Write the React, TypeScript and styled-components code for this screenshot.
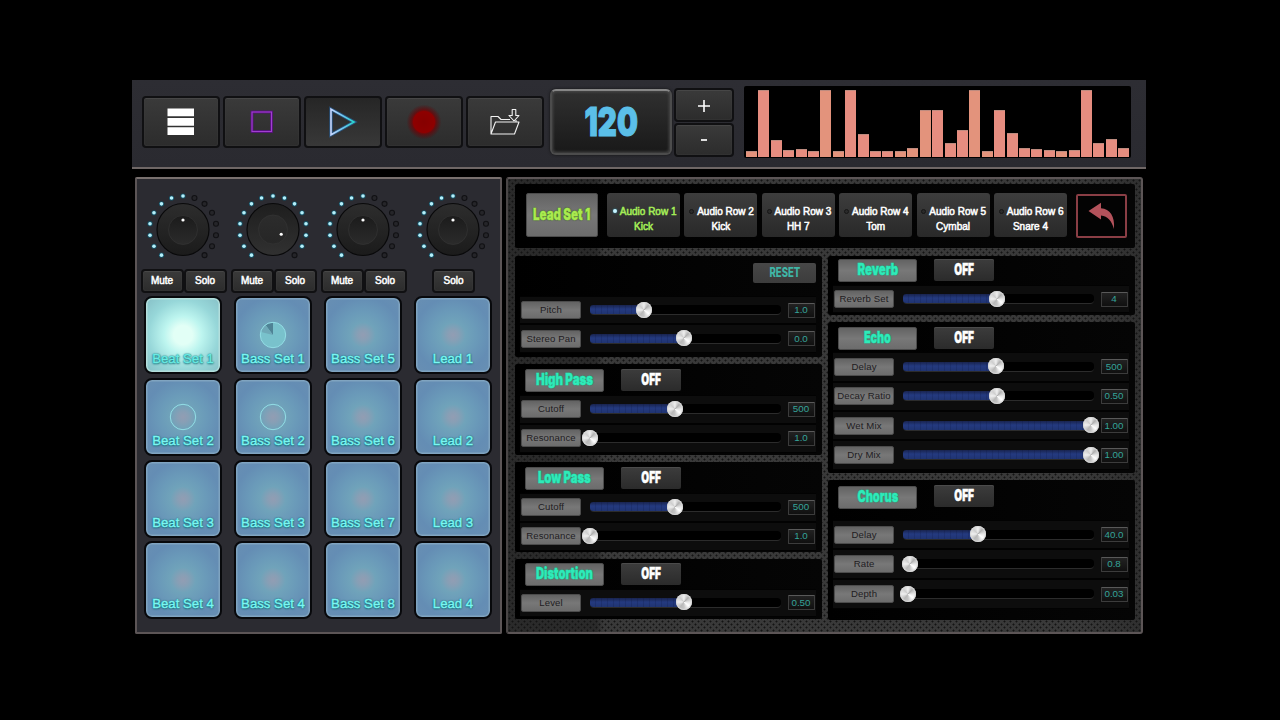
import React, { useLayoutEffect, useRef } from 'react';
import styled, { createGlobalStyle, css } from 'styled-components';

const GlobalStyle = createGlobalStyle`
  * { box-sizing: border-box; }
  body { margin: 0; background: #000; overflow: hidden; }
  button { margin: 0; padding: 0; border: 0; font: inherit; color: inherit; }
`;

const Screen = styled.div`
  width: 1280px;
  height: 720px;
  padding: 80px 134px 0 132px;
  background: #000;
  font-family: 'Liberation Sans', Arial, sans-serif;
`;

/* ---------- toolbar ---------- */

const Toolbar = styled.header`
  display: flex;
  height: 89px;
  padding-left: 10px;
  background: linear-gradient(#2d2d33, #2a2a30);
  border-bottom: 2px solid #6f6766;
`;

const Transport = styled.div`
  display: flex;
  gap: 3px;
  margin-top: 16px;
`;

const raised = css`
  background: linear-gradient(#3a3a3a, #2c2c2c);
  border: 2px solid #101012;
  border-radius: 4px;
  box-shadow: inset 0 1px 0 #464646, inset 0 0 2px #404040;
`;

const ToolButton = styled.button<{ $active?: boolean }>`
  ${raised}
  display: flex;
  align-items: center;
  justify-content: center;
  width: 78px;
  height: 52px;
  ${(p) => p.$active && css`background: linear-gradient(#262626, #383838); box-shadow: none;`}
`;

const Tempo = styled.div`
  display: flex;
  align-items: center;
  justify-content: center;
  width: 122px;
  height: 66px;
  margin: 9px 0 0 6px;
  color: #5bbfe8;
  background: linear-gradient(#303030, #191919);
  border: 2px solid #4c4c4c;
  border-top-color: #868686;
  border-radius: 6px;
  box-shadow: 0 0 3px #111, inset 0 0 3px 1px #4a4a4a;
`;

const TempoSteps = styled.div`
  display: flex;
  flex-direction: column;
  gap: 1px;
  margin: 8px 0 0 2px;
`;

const StepButton = styled.button`
  ${raised}
  display: flex;
  align-items: center;
  justify-content: center;
  width: 60px;
  height: 34px;
`;

const Spectrum = styled.div`
  display: flex;
  align-items: flex-end;
  gap: 1.4px;
  width: 387px;
  height: 72px;
  margin: 6px 0 0 10px;
  padding: 0 2px 1px 2px;
  background: #000;
  border-radius: 2px;
`;

const Bar = styled.div<{ $warm: boolean }>`
  flex: 1;
  background: ${(p) => (p.$warm ? '#e3937c' : '#e68d80')};
  border-top: 1px solid #bd8b7f;
`;

/* ---------- squeezed poster lettering ---------- */

const PosterBox = styled.span<{ $size: number; $weight: number; $lift: number }>`
  display: flex;
  justify-content: center;
  padding-bottom: ${(p) => p.$lift}px;
  font: ${(p) => p.$weight} ${(p) => p.$size}px/1 Inter, 'Liberation Sans', sans-serif;
  white-space: nowrap;
  -webkit-text-stroke: ${(p) => (p.$weight > 800 ? p.$size * 0.03 : 0)}px currentColor;
`;

const PosterInk = styled.span`
  display: block;
  flex: none;
`;

interface PosterProps { text: string; width: number; size?: number; weight?: number; lift?: number }

function Poster({ text, width, size = 15.6, weight = 900, lift = 0 }: PosterProps) {
  const ink = useRef<HTMLSpanElement>(null);
  useLayoutEffect(() => {
    const el = ink.current;
    if (el) el.style.transform = `scaleX(${width / el.offsetWidth})`;
  }, [text, width, size]);
  return (
    <PosterBox $size={size} $weight={weight} $lift={lift}>
      <PosterInk ref={ink}>{text}</PosterInk>
    </PosterBox>
  );
}

/* ---------- left panel ---------- */

const Body = styled.div`
  display: flex;
  gap: 4px;
  padding: 8px 0 0 3px;
`;

const PadPanel = styled.section`
  display: flex;
  width: 367px;
  height: 457px;
  padding: 13px 0 0 3px;
  background: #2b2b31;
  border: 2px solid #5c5556;
  border-top-color: #79716f;
  border-radius: 2px;
  gap: 4px;
`;

const Column = styled.div`
  display: flex;
  flex-direction: column;
  align-items: center;
  width: 86px;
`;

const Dial = styled.svg`
  display: block;
  width: 76px;
  height: 76px;
`;

const SmallButtons = styled.div`
  display: flex;
  justify-content: center;
  margin: 1px 0 3px 1px;
`;

const SmallButton = styled.button`
  ${raised}
  width: 43px;
  height: 24px;
  color: #fff;
  font-size: 10px;
  line-height: 20px;
  text-align: center;
  -webkit-text-stroke: 0.5px #fff;
`;

const Pads = styled.div`
  display: grid;
  gap: 3.8px;
`;

const Pad = styled.button<{ $lit?: boolean }>`
  display: grid;
  grid-template-rows: 52px 18px;
  justify-items: center;
  align-content: start;
  align-items: start;
  width: 78px;
  height: 78px;
  border: 2px solid #08090c;
  border-radius: 8px;
  box-shadow: inset 0 0 0 1.5px ${(p) => (p.$lit ? '#b4dfdc' : '#80a4c0')};
  background: ${(p) =>
    p.$lit
      ? 'radial-gradient(circle at 50% 50%, #e2fff6 0 18%, #bdf5ef 36%, #97d7d9 66%, #86bfc6 100%)'
      : 'radial-gradient(circle at 50% 50%, #929db3 0, #889fb5 10%, #70a3ba 24%, #6a9ab9 45%, #648db4 72%, #688fb3 100%)'};
`;

const PadMark = styled.svg`
  width: 28px;
  height: 28px;
  margin-top: 23px;
`;

const PadLabel = styled.span<{ $lit?: boolean }>`
  grid-row: 2;
  color: ${(p) => (p.$lit ? '#6cebe4' : '#7bf6f2')};
  font-size: 13.2px;
  line-height: 18px;
  white-space: nowrap;
  -webkit-text-stroke: 0.4px currentColor;
  text-shadow: 0 0 2px #0c6870, 0 1px 2px #0c6870, 0 0 1px #0c6870;
`;

/* ---------- right panel ---------- */

const FxPanel = styled.section`
  width: 637px;
  height: 457px;
  padding: 5px 6px 0 7px;
  border: 2px solid #5c5556;
  border-left-color: #4a4646;
  border-radius: 3px;
  background:
    radial-gradient(circle at 1.5px 1.5px, #141414 0 0.7px, transparent 1.3px) 0 0 / 6px 6px,
    radial-gradient(circle at 4.5px 4.5px, #141414 0 0.7px, transparent 1.3px) 0 0 / 6px 6px,
    linear-gradient(90deg, #2a2a2a 0 14%, #393939 15% 90%, #2f2f2f);
`;

const well = css`
  background: linear-gradient(90deg, #000, #050505);
  border-radius: 2px;
`;

const RowBar = styled.div`
  ${well}
  display: flex;
  align-items: flex-start;
  height: 64px;
  padding: 9px 0 0 11px;
  margin-bottom: 8px;
`;

const metal = css`
  display: flex;
  align-items: center;
  justify-content: center;
  background: linear-gradient(#636363, #787878 50%, #6c6c6c);
  border: 1px solid #4c4c4c;
  border-radius: 2px;
`;

const SetButton = styled.button`
  ${metal}
  width: 72px;
  height: 44px;
  margin: 0 9px 0 0;
  color: #a9ea50;
  text-shadow: 0 0 2px #2a4a08, 0 0 1px #2a4a08;
`;

const AudioRow = styled.button<{ $on?: boolean }>`
  display: grid;
  align-content: center;
  width: 73px;
  height: 44px;
  margin-right: 4.4px;
  border-radius: 3px;
  background: linear-gradient(#3d3d3d, #292929);
  color: ${(p) => (p.$on ? '#a6ee58' : '#fff')};
  font-size: 10px;
  line-height: 15px;
  text-align: center;
  white-space: nowrap;
  padding-top: 7px;
  -webkit-text-stroke: 0.5px currentColor;
`;

const RowName = styled.span`
  display: flex;
  align-items: center;
  justify-content: flex-end;
  gap: 3px;
  padding-right: 3.5px;
`;

const RowLed = styled.i<{ $on?: boolean }>`
  width: ${(p) => (p.$on ? 4 : 5)}px;
  height: ${(p) => (p.$on ? 4 : 5)}px;
  border-radius: 50%;
  background: ${(p) => (p.$on ? '#c9f4ff' : '#2a2a2a')};
  border: ${(p) => (p.$on ? '0' : '1px solid #161616')};
  box-shadow: ${(p) => (p.$on ? '0 0 2px #2a9ab5' : 'none')};
`;

const BackButton = styled.button`
  display: flex;
  align-items: center;
  justify-content: center;
  width: 51px;
  height: 44px;
  margin: 1px 0 0 5px;
  background: #030303;
  border: 2px solid #8a3e45;
  border-radius: 2px;
`;

const Columns = styled.div`
  display: flex;
  gap: 6px;
`;

const FxColumn = styled.div`
  display: flex;
  flex-direction: column;
  gap: 7px;
  width: 308px;
`;

const Unit = styled.div<{ $height: number; $top: number }>`
  ${well}
  height: ${(p) => p.$height}px;
  padding: ${(p) => p.$top}px 6px 0 5px;
`;

const UnitHeader = styled.div<{ $gap: number; $end?: boolean }>`
  display: flex;
  justify-content: ${(p) => (p.$end ? 'flex-end' : 'flex-start')};
  height: 22px;
  padding-left: 5px;
  margin-bottom: ${(p) => p.$gap}px;
`;

const UnitTitle = styled.span`
  ${metal}
  width: 79px;
  height: 23px;
  color: #2feab9;
  text-shadow: 0 0 2px #1d8a72, 0 0 1px #0b5a48;
`;

const Toggle = styled.button<{ $lift?: number }>`
  display: flex;
  align-items: center;
  justify-content: center;
  width: 60px;
  height: 22px;
  margin: -${(p) => p.$lift ?? 0}px 0 0 17px;
  color: #fff;
  background: linear-gradient(#3c3c3c, #2b2b2b);
  border-radius: 2px;
  box-shadow: inset 0 1px 0 #4b4b4b;
`;

const Reset = styled.button`
  display: flex;
  align-items: center;
  justify-content: center;
  width: 63px;
  height: 20px;
  color: #3fb5a6;
  background: linear-gradient(#474747, #3c3c3c);
  border-radius: 2px;
`;

const ParamRow = styled.div<{ $height: number }>`
  display: flex;
  align-items: center;
  height: ${(p) => p.$height}px;
  padding-left: 1px;
  background: linear-gradient(#020202 0 1px, #0d0d0d 1px calc(100% - 1px), #020202 calc(100% - 1px));
`;

const ParamLabel = styled.span`
  ${metal}
  width: 60px;
  height: 18px;
  margin-right: 8.5px;
  color: #211c1f;
  font: 9.6px/16px 'Liberation Sans', Arial, sans-serif;
  letter-spacing: 0.12px;
  white-space: nowrap;
`;

const Track = styled.div`
  position: relative;
  width: 191px;
  height: 10px;
  margin-right: 7px;
  background: #000;
  border-bottom: 1px solid #2c2c2c;
  border-radius: 4px;
`;

const Fill = styled.div`
  height: 9px;
  border-radius: 3px 0 0 3px;
  background:
    repeating-linear-gradient(90deg, transparent 0 5px, rgba(10, 20, 60, 0.2) 5px 6px),
    linear-gradient(#19244e, #243a80 45%, #203472);
`;

const Thumb = styled.div`
  position: absolute;
  top: -3.5px;
  width: 16px;
  height: 16px;
  margin-left: -8px;
  border-radius: 50%;
  background: conic-gradient(#f0f0f0, #b0b0b0 12%, #e6e6e6 25%, #fff 36%, #c4c4c4 50%, #b8b8b8 60%, #f0f0f0 75%, #cecece 88%, #f0f0f0);
  box-shadow: inset 0 0 1px 1px #d8d8d8;
`;

const ValueBox = styled.span`
  display: flex;
  align-items: center;
  justify-content: center;
  width: 27px;
  height: 15px;
  color: #35a399;
  font: 9.8px/12px 'Liberation Sans', Arial, sans-serif;
  background: linear-gradient(#222, #101010);
  border: 1px solid #3c3c3c;
  border-top-color: #595959;
  border-radius: 1px;
`;

/* ---------- data ---------- */

const BARS = [6.5, 67.5, 17.5, 7, 8.3, 6.5, 67.5, 6.5, 67.5, 23, 6.5, 6.5, 6.5, 9, 46.7, 46.7, 13.8, 27, 67.5, 6.5, 46.7, 24, 9, 8.5, 7, 6.5, 7, 67.5, 13.8, 17.7, 9];
const WARM = [0, 6, 7, 12, 13, 14, 18, 19, 25];

type Mark = 'playing' | 'ring' | undefined;
interface Channel { lit: number; angle: number; mute: boolean; pads: [string, Mark?][] }

const CHANNELS: Channel[] = [
  { lit: 8, angle: 0, mute: true, pads: [['Beat Set 1'], ['Beat Set 2', 'ring'], ['Beat Set 3'], ['Beat Set 4']] },
  { lit: 14, angle: 120, mute: true, pads: [['Bass Set 1', 'playing'], ['Bass Set 2', 'ring'], ['Bass Set 3'], ['Bass Set 4']] },
  { lit: 8, angle: 0, mute: true, pads: [['Bass Set 5'], ['Bass Set 6'], ['Bass Set 7'], ['Bass Set 8']] },
  { lit: 8, angle: 0, mute: false, pads: [['Lead 1'], ['Lead 2'], ['Lead 3'], ['Lead 4']] },
];

const ROWS = ['Kick', 'Kick', 'HH 7', 'Tom', 'Cymbal', 'Snare 4'];

type Param = [label: string, at: number, value: string];
interface Fx { title?: string; titleWidth?: number; height: number; top: number; gap: number; pitch: number; lift?: number; params: Param[] }

const LEFT: Fx[] = [
  { height: 101, top: 6.5, gap: 11.2, pitch: 28.8, params: [['Pitch', 54, '1.0'], ['Stereo Pan', 94.5, '0.0']] },
  { title: 'High Pass', titleWidth: 57, height: 91, top: 5, gap: 3.7, pitch: 29, params: [['Cutoff', 85.5, '500'], ['Resonance', 0, '1.0']] },
  { title: 'Low Pass', titleWidth: 53, height: 90, top: 5, gap: 3.5, pitch: 29, lift: 0.5, params: [['Cutoff', 85.5, '500'], ['Resonance', 0, '1.0']] },
  { title: 'Distortion', titleWidth: 57, height: 60, top: 4, gap: 3.5, pitch: 28, lift: 0.5, params: [['Level', 94.5, '0.50']] },
];

const RIGHT: Fx[] = [
  { title: 'Reverb', titleWidth: 41, height: 59, top: 3, gap: 4, pitch: 28, params: [['Reverb Set', 94, '4']] },
  { title: 'Echo', titleWidth: 27, height: 151, top: 5, gap: 3.3, pitch: 29.4, params: [['Delay', 93, '500'], ['Decay Ratio', 94, '0.50'], ['Wet Mix', 188.5, '1.00'], ['Dry Mix', 188.5, '1.00']] },
  { title: 'Chorus', titleWidth: 41, height: 140, top: 6, gap: 11.7, pitch: 29.8, lift: 1.5, params: [['Delay', 75, '40.0'], ['Rate', 7, '0.8'], ['Depth', 5, '0.03']] },
];

/* ---------- pieces ---------- */

function Knob({ id, lit, angle }: { id: number; lit: number; angle: number }) {
  const big = lit === 14;
  const rad = (d: number) => (d * Math.PI) / 180;
  return (
    <Dial viewBox="-38 -37.5 76 76">
      <defs>
        <linearGradient id={`k${id}`} x1="0" y1="0" x2="0" y2="1">
          <stop offset="0" stopColor={big ? '#1e1e1e' : '#2d2d2d'} />
          <stop offset="1" stopColor={big ? '#313131' : '#1b1b1b'} />
        </linearGradient>
        <linearGradient id={`c${id}`} x1="0" y1="0" x2="0" y2="1">
          <stop offset="0" stopColor={big ? '#2c2c2c' : '#1b1b1b'} />
          <stop offset="1" stopColor={big ? '#262626' : '#2b2b2b'} />
        </linearGradient>
      </defs>
      {Array.from({ length: 15 }, (_, i) => {
        const a = rad(-140 + i * 20);
        const x = Math.sin(a) * 33.5;
        const y = -Math.cos(a) * 33.5;
        return i < lit ? (
          <g key={i}>
            <circle cx={x} cy={y} r="2.6" fill="#145064" />
            <circle cx={x} cy={y} r="1.8" fill="#b5f0fb" />
          </g>
        ) : (
          <circle key={i} cx={x} cy={y} r="2.5" fill="#252529" stroke="#111114" strokeWidth="1.1" />
        );
      })}
      <circle r="26" fill={`url(#k${id})`} stroke="#09090a" strokeWidth="1.2" />
      <circle r="14.5" cy={big ? 0 : 0.5} fill={`url(#c${id})`} stroke="#343434" strokeWidth="0.7" />
      <circle cx={Math.sin(rad(angle)) * 9.5} cy={-Math.cos(rad(angle)) * 9.5} r="1.6" fill="#fff" />
    </Dial>
  );
}

function PadSign({ mark }: { mark: Mark }) {
  if (!mark) return null;
  return (
    <PadMark viewBox="-14 -14 28 28">
      {mark === 'playing' && (
        <>
          <circle r="12.5" fill="#79c2cc" />
          <path d="M0 0 L0 -12.5 A12.5 12.5 0 0 0 -7.5 -10 Z" fill="#4f8395" />
          <path d="M0 0 L-7.5 -10 A12.5 12.5 0 0 0 -12 -3 Z" fill="#6fa9b8" />
        </>
      )}
      <circle r="12.7" fill="none" stroke="#93dfe6" strokeWidth="1" />
    </PadMark>
  );
}

function Effect({ fx }: { fx: Fx }) {
  return (
    <Unit $height={fx.height} $top={fx.top}>
      <UnitHeader $gap={fx.gap} $end={!fx.title}>
        {fx.title ? (
          <>
            <UnitTitle><Poster text={fx.title} width={fx.titleWidth!} lift={2} /></UnitTitle>
            <Toggle $lift={fx.lift}><Poster text="OFF" width={19.5} /></Toggle>
          </>
        ) : (
          <Reset><Poster text="RESET" width={31} size={13} weight={800} /></Reset>
        )}
      </UnitHeader>
      {fx.params.map(([label, at, value]) => (
        <ParamRow key={label} $height={fx.pitch}>
          <ParamLabel>{label}</ParamLabel>
          <Track>
            <Fill style={{ width: at }} />
            <Thumb style={{ left: at }} />
          </Track>
          <ValueBox>{value}</ValueBox>
        </ParamRow>
      ))}
    </Unit>
  );
}

export default function App() {
  return (
    <Screen>
      <GlobalStyle />
      <Toolbar>
        <Transport>
          <ToolButton aria-label="Menu">
            <svg width="30" height="30" viewBox="0 0 30 30">
              <path d="M1.5 1.5h26.500v7.800h-26.500zM1.5 10.900h26.500v7.800h-26.500zM1.5 20.300h26.500v7.800h-26.500z" fill="#fff" />
            </svg>
          </ToolButton>
          <ToolButton aria-label="Stop">
            <svg width="30" height="30" viewBox="0 0 30 30">
              <rect x="5" y="5" width="19.500" height="19.500" fill="none" stroke="#571080" strokeWidth="2.8" />
              <rect x="5" y="5" width="19.500" height="19.500" fill="none" stroke="#a23fd0" strokeWidth="1.1" />
            </svg>
          </ToolButton>
          <ToolButton $active aria-label="Play">
            <svg width="34" height="34" viewBox="0 0 34 34">
              <defs>
                <linearGradient id="play" x1="0" x2="1">
                  <stop offset="0" stopColor="#c9d8ff" />
                  <stop offset="0.5" stopColor="#6fc6f0" />
                  <stop offset="1" stopColor="#27d6cc" />
                </linearGradient>
              </defs>
              <path d="M5 4.200 28 17 5 29.800z" fill="none" stroke="#2465a8" strokeWidth="3.6" opacity="0.6" />
              <path d="M5 4.200 28 17 5 29.800z" fill="none" stroke="url(#play)" strokeWidth="1.6" />
            </svg>
          </ToolButton>
          <ToolButton aria-label="Record">
            <svg width="36" height="36" viewBox="0 0 36 36">
              <defs>
                <radialGradient id="rec">
                  <stop offset="0" stopColor="#860000" />
                  <stop offset="0.6" stopColor="#8e0000" />
                  <stop offset="0.7" stopColor="#6c0508" stopOpacity="0.75" />
                  <stop offset="1" stopColor="#5a0508" stopOpacity="0" />
                </radialGradient>
              </defs>
              <circle cx="18" cy="18" r="17.500" fill="url(#rec)" />
            </svg>
          </ToolButton>
          <ToolButton aria-label="Load">
            <svg width="32" height="30" viewBox="0 0 32 30" fill="none" stroke="#f2f2f2" strokeWidth="1.1" strokeLinejoin="round">
              <path d="M2 27V9.500h7l3 3h9M2 27l4.500-12h23.500L25.500 27zM27 15v-2" />
              <path d="M23.200 2.500h3.600v6h3.200l-5 5.500-5-5.500h3.200z" />
            </svg>
          </ToolButton>
        </Transport>
        <Tempo><Poster text="120" width={53} size={40} /></Tempo>
        <TempoSteps>
          <StepButton aria-label="Faster">
            <svg width="14" height="14" viewBox="0 0 14 14" stroke="#fff" strokeWidth="1.6"><path d="M7 2v12M1 8h12" /></svg>
          </StepButton>
          <StepButton aria-label="Slower">
            <svg width="14" height="14" viewBox="0 0 14 14" stroke="#dedede" strokeWidth="2"><path d="M4 7h6" /></svg>
          </StepButton>
        </TempoSteps>
        <Spectrum>
          {BARS.map((h, i) => (
            <Bar key={i} $warm={WARM.includes(i)} style={{ height: h }} />
          ))}
        </Spectrum>
      </Toolbar>
      <Body>
        <PadPanel>
          {CHANNELS.map((c, n) => (
            <Column key={n}>
              <Knob id={n} lit={c.lit} angle={c.angle} />
              <SmallButtons>
                {c.mute && <SmallButton>Mute</SmallButton>}
                <SmallButton>Solo</SmallButton>
              </SmallButtons>
              <Pads>
                {c.pads.map(([name, mark]) => (
                  <Pad key={name} $lit={name === 'Beat Set 1'}>
                    <PadSign mark={mark} />
                    <PadLabel $lit={name === 'Beat Set 1'}>{name}</PadLabel>
                  </Pad>
                ))}
              </Pads>
            </Column>
          ))}
        </PadPanel>
        <FxPanel>
          <RowBar>
            <SetButton><Poster text="Lead Set 1" width={57} lift={1} /></SetButton>
            {ROWS.map((name, i) => (
              <AudioRow key={i} $on={i === 0}>
                <RowName><RowLed $on={i === 0} />Audio Row {i + 1}</RowName>
                <span>{name}</span>
              </AudioRow>
            ))}
            <BackButton aria-label="Back">
              <svg width="30" height="28" viewBox="0 0 30 28">
                <path d="M1.500 9 14 .8v5.500C23 7 28 14 27 27 24.500 18.500 21 14.500 14 13.500v4z" fill="#b3525b" />
              </svg>
            </BackButton>
          </RowBar>
          <Columns>
            <FxColumn>{LEFT.map((fx, i) => <Effect key={i} fx={fx} />)}</FxColumn>
            <FxColumn>{RIGHT.map((fx, i) => <Effect key={i} fx={fx} />)}</FxColumn>
          </Columns>
        </FxPanel>
      </Body>
    </Screen>
  );
}
